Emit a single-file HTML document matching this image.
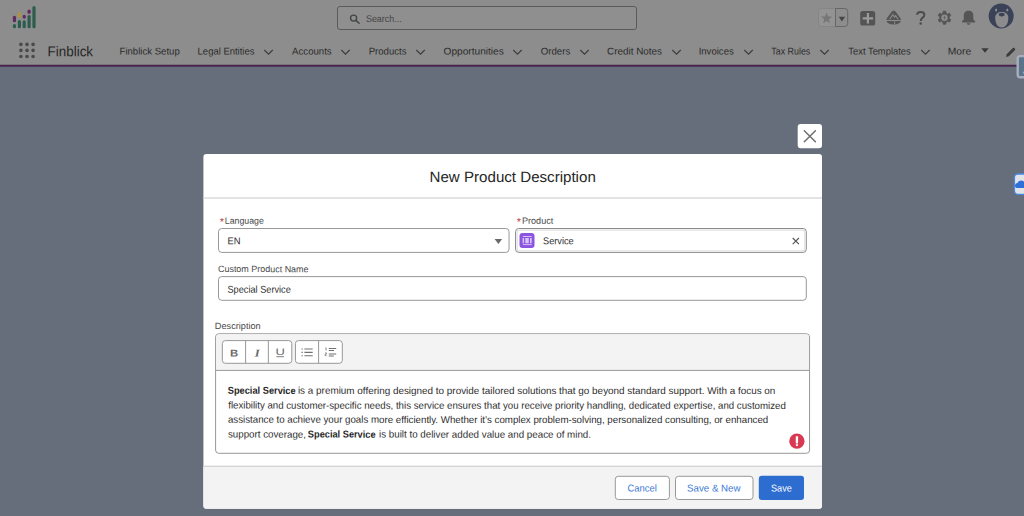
<!DOCTYPE html>
<html>
<head>
<meta charset="utf-8">
<title>New Product Description</title>
<style>
*{box-sizing:border-box;margin:0;padding:0}
html,body{width:1024px;height:516px;overflow:hidden}
body{font-family:"Liberation Sans",sans-serif;background:#666d7b;position:relative;color:#181818;font-size:9.5px}
.abs{position:absolute}
#hdr{left:0;top:0;width:1024px;height:65px;background:#8d8d8d}
.chev{top:48.7px;width:11px;height:7px}
#search{left:337px;top:6px;width:300px;height:23.5px;border:1px solid #5a5a5a;border-radius:3px;background:#8f8f8f}
</style>
</head>
<body>
<!-- dimmed global header -->
<div id="hdr" class="abs"></div>
<svg class="abs" style="left:0;top:60px" width="1024" height="10" viewBox="0 0 1024 10"><rect x="0" y="4.75" width="1024" height="1.95" fill="#482350"/></svg>

<!-- logo -->
<svg class="abs" style="left:0;top:0" width="40" height="32" viewBox="0 0 40 32"><rect x="12.85" y="15.7" width="3.2" height="6.60" rx="1.6" fill="#5e2a60"/><rect x="12.85" y="24.1" width="3.2" height="4.20" rx="1.6" fill="#2c5c4e"/><rect x="17.80" y="11.9" width="3.2" height="5.90" rx="1.6" fill="#b3933a"/><rect x="17.80" y="19.9" width="3.2" height="8.40" rx="1.6" fill="#2c5c4e"/><rect x="22.60" y="14.65" width="3.2" height="4.05" rx="1.6" fill="#5e2a60"/><rect x="22.60" y="20.2" width="3.2" height="8.10" rx="1.6" fill="#2c5c4e"/><rect x="27.50" y="9.6" width="3.2" height="4.20" rx="1.6" fill="#5e2a60"/><rect x="27.50" y="15" width="3.2" height="13.30" rx="1.6" fill="#2c5c4e"/><rect x="32.40" y="6.1" width="3.2" height="22.20" rx="1.6" fill="#2c5c4e"/></svg>

<!-- search -->
<div id="search" class="abs"></div>
<svg class="abs" style="left:345px;top:10px" width="20" height="18" viewBox="345 10 20 18"><circle cx="353.600" cy="18.100" r="3.050" fill="none" stroke="#444" stroke-width="1.350"/><path d="M355.900 20.400L359.100 23.200" stroke="#444" stroke-width="1.500" stroke-linecap="round"/></svg>

<!-- right icons -->
<svg class="abs" style="left:0;top:0" width="1024" height="36" viewBox="0 0 1024 36">
<path d="M835.5 8.500H821.500a3 3 0 0 0-3 3v12a3 3 0 0 0 3 3H835.500z" fill="#939393" stroke="#858585" stroke-width="1"/>
<path d="M835.500 8.500H844.700a3 3 0 0 1 3 3v12a3 3 0 0 1-3 3H835.500z" fill="#8d8d8d" stroke="#666" stroke-width="1"/>
<path d="M826.60 12.50L828.07 16.38L832.21 16.58L828.98 19.17L830.07 23.17L826.60 20.90L823.13 23.17L824.22 19.17L820.99 16.58L825.13 16.38Z" fill="#767676"/>
<path d="M838.700 16.800h6.400l-3.200 4.800z" fill="#454545"/>
<rect x="860.200" y="10.900" width="15" height="14.600" rx="2.600" fill="#545454"/>
<path d="M867.900 13.100v10.400M862.700 18.300h10.400" stroke="#9b9b9b" stroke-width="2.200" fill="none"/>
<path d="M893.700 10.800C894.800 10.800 895.600 11.400 896.300 12.400L900.700 18.600C901.200 19.400 900.900 20.100 900.200 20.100H887.200C886.500 20.100 886.200 19.400 886.700 18.600L891.100 12.400C891.800 11.400 892.600 10.800 893.700 10.800Z" fill="#555555"/>
<path d="M889.600 19.300L892.800 14.700L894.500 17.100L895.600 15.700L898.100 19.300" fill="none" stroke="#8d8d8d" stroke-width="1.050"/>
<path d="M886.500 21.100H900.900C900.900 21.100 900.500 22.700 898.600 23.500C896 24.950 891.400 24.950 888.800 23.500C886.900 22.700 886.500 21.100 886.500 21.100Z" fill="#555555"/>
<path d="M894.200 21.100L895 22.800L893.800 24.600" fill="none" stroke="#8d8d8d" stroke-width="0.900"/>
<path d="M917.100 14.800C917.100 12.800 918.600 11.900 920.700 11.900C922.900 11.900 924.400 13.100 924.400 14.900C924.400 17.700 920.700 17.600 920.700 20.900" fill="none" stroke="#4c4c4c" stroke-width="2"/>
<circle cx="920.700" cy="23.600" r="1.250" fill="#4c4c4c"/>
<path d="M942.98 13.25L943.19 11.23L945.81 11.23L946.02 13.25L947.59 14.16L949.45 13.33L950.76 15.60L949.11 16.80L949.11 18.60L950.76 19.80L949.45 22.07L947.59 21.24L946.02 22.15L945.81 24.17L943.19 24.17L942.98 22.15L941.41 21.24L939.55 22.07L938.24 19.80L939.89 18.60L939.89 16.80L938.24 15.60L939.55 13.33L941.41 14.16Z" fill="#555555" stroke="#555555" stroke-width="0.900" stroke-linejoin="round"/>
<circle cx="944.500" cy="17.700" r="3.200" fill="#8d8d8d"/>
<path d="M945.200 15.300l-2 2.700h1.300l-.6 2.100 2-2.700h-1.300z" fill="#555555"/>
<path d="M968.600 10.800C965.300 10.800 963.800 12.900 963.800 15.600V18.200C963.900 19.600 963.200 20.400 962.200 21.100C961.600 21.600 961.900 22.400 962.700 22.400H974.500C975.300 22.400 975.600 21.600 975 21.100C974 20.400 973.300 19.600 973.300 18.200V15.600C973.400 12.900 971.900 10.800 968.600 10.800Z" fill="#555555"/>
<path d="M966.700 23.300H970.500C970.500 24.200 969.700 24.800 968.600 24.800C967.500 24.800 966.700 24.200 966.700 23.300Z" fill="#555555"/>
<circle cx="1001.150" cy="16" r="12.500" fill="#3a4258"/>
<path d="M995.200 17.500C995.200 13.800 997.800 11.900 1001.700 11.900C1005.600 11.900 1008.300 13.800 1008.300 17.500C1008.300 22.500 1006.800 27.400 1001.700 27.400C996.700 27.400 995.200 22.500 995.200 17.500Z" fill="#8c8c8c"/>
<ellipse cx="996.100" cy="10" rx="1.050" ry="1.500" fill="#8c8c8c"/><ellipse cx="1007.300" cy="10" rx="1.050" ry="1.500" fill="#8c8c8c"/>
<ellipse cx="1001.700" cy="14.600" rx="3" ry="1.800" fill="#3a4258"/>
</svg>

<!-- app launcher dots -->
<svg class="abs" style="left:15px;top:40px" width="24" height="22" viewBox="15 40 24 22"><g fill="#4a4a4a"><circle cx="20.9" cy="44.4" r="1.8"/><circle cx="27.0" cy="44.4" r="1.8"/><circle cx="33.1" cy="44.4" r="1.8"/><circle cx="20.9" cy="50.4" r="1.8"/><circle cx="27.0" cy="50.4" r="1.8"/><circle cx="33.1" cy="50.4" r="1.8"/><circle cx="20.9" cy="56.5" r="1.8"/><circle cx="27.0" cy="56.5" r="1.8"/><circle cx="33.1" cy="56.5" r="1.8"/></g></svg>

<!-- nav -->
<svg class="abs chev" style="left:263px" viewBox="0 0 11 7"><path d="M1.3 1l4.200 4.100L9.700 1" fill="none" stroke="#3c3c3c" stroke-width="1.150"/></svg>
<svg class="abs chev" style="left:340px" viewBox="0 0 11 7"><path d="M1.3 1l4.200 4.100L9.700 1" fill="none" stroke="#3c3c3c" stroke-width="1.150"/></svg>
<svg class="abs chev" style="left:415px" viewBox="0 0 11 7"><path d="M1.3 1l4.200 4.100L9.700 1" fill="none" stroke="#3c3c3c" stroke-width="1.150"/></svg>
<svg class="abs chev" style="left:512px" viewBox="0 0 11 7"><path d="M1.3 1l4.200 4.100L9.700 1" fill="none" stroke="#3c3c3c" stroke-width="1.150"/></svg>
<svg class="abs chev" style="left:579px" viewBox="0 0 11 7"><path d="M1.3 1l4.200 4.100L9.700 1" fill="none" stroke="#3c3c3c" stroke-width="1.150"/></svg>
<svg class="abs chev" style="left:671px" viewBox="0 0 11 7"><path d="M1.3 1l4.200 4.100L9.700 1" fill="none" stroke="#3c3c3c" stroke-width="1.150"/></svg>
<svg class="abs chev" style="left:743px" viewBox="0 0 11 7"><path d="M1.3 1l4.200 4.100L9.700 1" fill="none" stroke="#3c3c3c" stroke-width="1.150"/></svg>
<svg class="abs chev" style="left:819px" viewBox="0 0 11 7"><path d="M1.3 1l4.200 4.100L9.700 1" fill="none" stroke="#3c3c3c" stroke-width="1.150"/></svg>
<svg class="abs chev" style="left:920px" viewBox="0 0 11 7"><path d="M1.3 1l4.200 4.100L9.700 1" fill="none" stroke="#3c3c3c" stroke-width="1.150"/></svg>
<svg class="abs" style="left:981px;top:48px" width="8" height="5" viewBox="0 0 8 5"><path d="M0.300 0.200h7.400L4 4.800z" fill="#3a3a3a"/></svg>
<svg class="abs" style="left:1005.300px;top:46.500px" width="11" height="11" viewBox="0 0 11 11"><path d="M1 10l.7-2.800 6.200-6.200c.4-.4.900-.4 1.300 0l.8.800c.4.400.4.900 0 1.300L3.800 9.300z" fill="#3a3a3a"/></svg>

<!-- right edge widgets -->
<svg class="abs" style="left:1004px;top:50px" width="20" height="150" viewBox="1004 50 20 150">
<rect x="1017.700" y="56.100" width="12" height="21.200" rx="2.500" fill="#5b7389" stroke="#a7aebb" stroke-width="2.400"/>
<path d="M1022.500 72.500l1.500-1.200v3z" fill="#8fa3b8"/>
<rect x="1014.400" y="174" width="14" height="20.300" rx="3.500" fill="#e2e3e6" stroke="#4788e2" stroke-width="1.350"/>
<path d="M1015 185.800c0-1.500 1.100-2.500 2.500-2.700c.5-1.600 1.900-2.600 3.600-2.600c1 0 2 .4 2.900 1.100V188h-7c-1.200 0-2-.9-2-2.200z" fill="#2f6fd8"/>
</svg>
<!-- close button -->
<svg class="abs" style="left:0;top:0" width="1024" height="516" viewBox="0 0 1024 516">
<rect x="797.700" y="123.900" width="24.300" height="24.300" rx="3" fill="#fff"/>
<path d="M804.300 130.700L815.400 141.800M815.400 130.700L804.300 141.800" stroke="#707070" stroke-width="1.550" fill="none" stroke-linecap="round"/>
<rect x="203.400" y="154.050" width="618.600" height="354.600" rx="3" fill="#fff"/>
<path d="M203.400 466.200H822V505.650a3 3 0 0 1-3 3H206.400a3 3 0 0 1-3-3z" fill="#f3f3f3"/>
<rect x="203.400" y="465.600" width="618.600" height="1.350" fill="#d4d4d4"/>
<rect x="203.400" y="197.300" width="618.600" height="1.450" fill="#d9d9d9"/>
<rect x="218.5" y="228.5" width="290.55" height="23.90" rx="3.2" fill="#fff" stroke="#989898" stroke-width="1"/>
<rect x="515.55" y="228.5" width="290.75" height="23.90" rx="3.2" fill="#fff" stroke="#8a8a8a" stroke-width="1"/>
<rect x="517.1" y="230.1" width="287.65" height="20.70" rx="2.2" fill="#fff" stroke="#e2e2e2" stroke-width="1.3"/>
<rect x="218.5" y="276.6" width="587.80" height="23.70" rx="3.2" fill="#fff" stroke="#989898" stroke-width="1"/>
<path d="M494.600 239.100h7.500l-3.750 5z" fill="#6a6a6a"/>
<rect x="519.500" y="232.950" width="15" height="15" rx="3" fill="#8b55e0"/>
<path d="M522.900 236.500h8.800M522.900 244.600h8.800" stroke="#e6dbfa" stroke-width="0.800"/>
<path d="M522.600 237.900h1.500v5.300h-1.500zM525.300 237.900h3.500v5.300h-3.500zM530 237.900h1.700v5.300h-1.700z" fill="#d6c4f5"/>
<path d="M792.700 238L798.900 244.200M798.900 238L792.700 244.200" stroke="#555" stroke-width="1.150" fill="none"/>
<rect x="215.6" y="333.75" width="593.95" height="119.55" rx="3.2" fill="#fff" stroke="#989898" stroke-width="1"/>
<path d="M216.100 370.400V337.250a3 3 0 0 1 3-3H806.050a3 3 0 0 1 3 3V370.400z" fill="#f3f3f3"/>
<rect x="215.600" y="369.900" width="593.950" height="1" fill="#989898"/>
<rect x="222.35" y="340.6" width="69.45" height="22.70" rx="3" fill="#fff" stroke="#989898" stroke-width="1"/>
<rect x="295.45" y="340.6" width="46.85" height="22.70" rx="3" fill="#fff" stroke="#989898" stroke-width="1"/>
<path d="M245.600 340.600v22.700M268.350 340.600v22.700M318.600 340.600v22.700" stroke="#989898" stroke-width="1"/>
<path d="M304.400 349h8.300M304.400 352.350h8.300M304.400 355.650h8.300" stroke="#707070" stroke-width="1.050"/>
<path d="M301.500 349h1.300M301.500 352.350h1.300M301.500 355.650h1.300" stroke="#707070" stroke-width="1.050"/>
<path d="M328.800 348.500h7.400M328.800 350.500h5.200M328.800 353.900h7.400M328.800 355.900h5" stroke="#707070" stroke-width="1.050"/>
<path d="M325.300 348.200l.8-.4v2.800M325.100 352.900h1.300v1.300h-1.300v1.400h1.400" stroke="#707070" stroke-width="0.750" fill="none"/>
<path d="M276.400 356.700h7.600" stroke="#707070" stroke-width="0.900"/>
<circle cx="796.900" cy="441.200" r="7.650" fill="#d93a52"/>
<rect x="795.750" y="436.300" width="2.350" height="7.100" rx="0.500" fill="#fff"/><rect x="795.850" y="444.200" width="2.150" height="1.700" rx="0.400" fill="#fff"/>
<rect x="615.3" y="476.3" width="54.10" height="23.20" rx="3" fill="#fff" stroke="#989898" stroke-width="1"/>
<rect x="675.5" y="476.3" width="77.50" height="23.20" rx="3" fill="#fff" stroke="#989898" stroke-width="1"/>
<rect x="758.800" y="475.850" width="45.200" height="24.100" rx="3" fill="#2c6dcf"/>
</svg>
<svg class="abs" id="tsvg" style="left:0;top:0" width="1024" height="516" viewBox="0 0 1024 516" font-family="'Liberation Sans',sans-serif" fill="#262626">
<text id="t_title" transform="translate(429.56 181.90) rotate(0.03) scale(1.0077 1)" font-size="15">New Product Description</text>
<text id="t_a1" transform="translate(219.75 225.61) rotate(0.03) scale(1.0000 1)" font-size="11" fill="#b5413e">*</text>
<text id="t_l1" transform="translate(224.77 223.80) rotate(0.03) scale(0.9682 1)" font-size="9.1" fill="#484848">Language</text>
<text id="t_a2" transform="translate(516.75 225.61) rotate(0.03) scale(1.0000 1)" font-size="11" fill="#b5413e">*</text>
<text id="t_l2" transform="translate(521.96 223.80) rotate(0.03) scale(1.0000 1)" font-size="9.1" fill="#484848">Product</text>
<text id="t_l3" transform="translate(217.96 272.10) rotate(0.03) scale(0.9863 1)" font-size="9.1" fill="#484848">Custom Product Name</text>
<text id="t_l4" transform="translate(214.87 328.90) rotate(0.03) scale(1.0072 1)" font-size="9.1" fill="#484848">Description</text>
<text id="t_v1" transform="translate(227.50 244.30) rotate(0.03) scale(0.9449 1)" font-size="9.9" fill="#2e2e2e">EN</text>
<text id="t_v2" transform="translate(542.99 244.30) rotate(0.03) scale(0.9328 1)" font-size="9.9" fill="#2e2e2e">Service</text>
<text id="t_v3" transform="translate(227.43 292.70) rotate(0.03) scale(0.9303 1)" font-size="9.9" fill="#2e2e2e">Special Service</text>
<text id="t_B" transform="translate(229.96 356.45) rotate(0.03) scale(1.1424 1)" font-size="10" fill="#6b6b6b" font-weight="bold">B</text>
<text id="t_I" transform="translate(254.74 356.45) rotate(0.03) scale(1.2121 1)" font-size="10.5" fill="#6b6b6b" font-weight="bold" font-style="italic" font-family="'Liberation Serif',serif">I</text>
<text id="t_U" transform="translate(275.48 354.90) rotate(0.03) scale(1.3959 1)" font-size="9.3" fill="#6b6b6b">U</text>
<text id="t_p1a" transform="translate(227.76 393.85) rotate(0.03) scale(0.9345 1)" font-size="9.9" font-weight="bold">Special Service</text>
<text id="t_p1b" transform="translate(297.92 393.85) rotate(0.03) scale(1.0016 1)" font-size="9.9" fill="#2e2e2e">is a premium offering designed to provide tailored solutions that go beyond standard support. With a focus on</text>
<text id="t_p2" transform="translate(228.19 408.60) rotate(0.03) scale(0.9783 1)" font-size="9.9" fill="#2e2e2e">flexibility and customer-specific needs, this service ensures that you receive priority handling, dedicated expertise, and customized</text>
<text id="t_p3" transform="translate(227.94 422.80) rotate(0.03) scale(0.9825 1)" font-size="9.9" fill="#2e2e2e">assistance to achieve your goals more efficiently. Whether it’s complex problem-solving, personalized consulting, or enhanced</text>
<text id="t_p4a" transform="translate(227.96 437.60) rotate(0.03) scale(0.9853 1)" font-size="9.9" fill="#2e2e2e">support coverage,</text>
<text id="t_p4b" transform="translate(307.85 437.60) rotate(0.03) scale(0.9337 1)" font-size="9.9" font-weight="bold">Special Service</text>
<text id="t_p4c" transform="translate(379.03 437.60) rotate(0.03) scale(0.9895 1)" font-size="9.9" fill="#2e2e2e">is built to deliver added value and peace of mind.</text>
<text id="t_b1" transform="translate(627.57 491.50) rotate(0.03) scale(0.9517 1)" font-size="9.9" fill="#3c78d4">Cancel</text>
<text id="t_b2" transform="translate(687.12 491.50) rotate(0.03) scale(0.9803 1)" font-size="9.9" fill="#3c78d4">Save &amp; New</text>
<text id="t_b3" transform="translate(771.02 491.50) rotate(0.03) scale(0.9252 1)" font-size="9.9" fill="#fff">Save</text>
<text id="n0" transform="translate(119.53 54.55) rotate(0.03) scale(0.9799 1)" font-size="9.8" fill="#2b2b2b">Finblick Setup</text>
<text id="n1" transform="translate(197.61 54.55) rotate(0.03) scale(0.9666 1)" font-size="9.8" fill="#2b2b2b">Legal Entities</text>
<text id="n2" transform="translate(292.11 54.55) rotate(0.03) scale(0.9823 1)" font-size="9.8" fill="#2b2b2b">Accounts</text>
<text id="n3" transform="translate(368.63 54.55) rotate(0.03) scale(0.9835 1)" font-size="9.8" fill="#2b2b2b">Products</text>
<text id="n4" transform="translate(443.49 54.55) rotate(0.03) scale(1.0364 1)" font-size="9.8" fill="#2b2b2b">Opportunities</text>
<text id="n5" transform="translate(540.75 54.55) rotate(0.03) scale(0.9851 1)" font-size="9.8" fill="#2b2b2b">Orders</text>
<text id="n6" transform="translate(607.00 54.55) rotate(0.03) scale(1.0106 1)" font-size="9.8" fill="#2b2b2b">Credit Notes</text>
<text id="n7" transform="translate(698.65 54.55) rotate(0.03) scale(0.9774 1)" font-size="9.8" fill="#2b2b2b">Invoices</text>
<text id="n8" transform="translate(771.28 54.55) rotate(0.03) scale(0.9078 1)" font-size="9.8" fill="#2b2b2b">Tax Rules</text>
<text id="n9" transform="translate(848.26 54.55) rotate(0.03) scale(0.9602 1)" font-size="9.8" fill="#2b2b2b">Text Templates</text>
<text id="n10" transform="translate(947.76 54.55) rotate(0.03) scale(1.0524 1)" font-size="9.8" fill="#2b2b2b">More</text>
<text id="t_app" transform="translate(47.56 56.15) rotate(0.03) scale(0.9464 1)" font-size="14.2" fill="#262626">Finblick</text>
<text id="t_search" transform="translate(365.92 22.00) rotate(0.03) scale(0.9126 1)" font-size="9.8" fill="#454545">Search...</text>
</svg>
</body>
</html>
